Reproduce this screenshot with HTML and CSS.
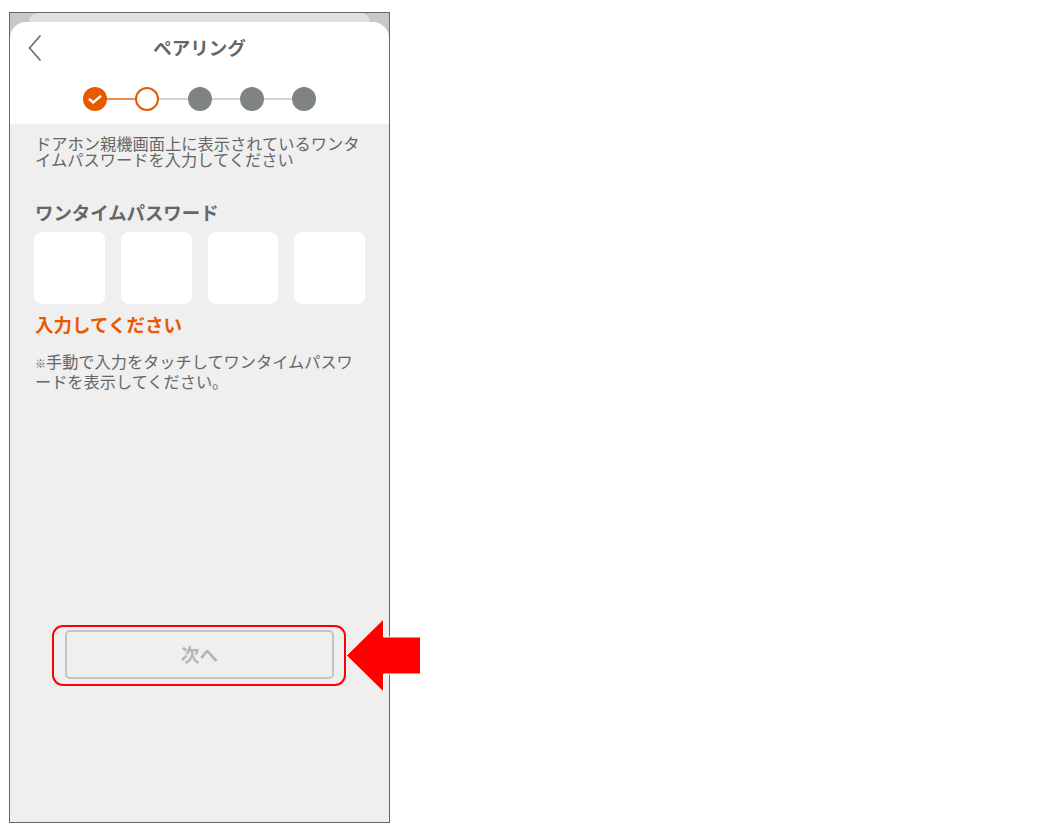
FILE: index.html
```html
<!DOCTYPE html>
<html lang="ja">
<head>
    <meta charset="UTF-8">
    <meta name="viewport" content="width=device-width, initial-scale=1.0">
    <title>ペアリング</title>
    <link rel="stylesheet" href="styles.css">
</head>
<body>
    <div class="phone">
        <div class="sheet-behind"></div>
        <div class="sheet-head">
            <div class="title-bar">
                <svg class="back-icon" width="14" height="28" viewBox="0 0 14 28">
                    <path d="M12.5 1.5 L1.5 14 L12.5 26.5" fill="none" stroke="#666" stroke-width="1.6"/>
                </svg>
                <h1>ぺアリング</h1>
            </div>
            <div class="steps">
                <span class="dot done">
                    <svg width="16" height="12" viewBox="0 0 16 12">
                        <path d="M2 6 L6.2 9.4 L14 2.8" fill="none" stroke="#fff" stroke-width="2.4"/>
                    </svg>
                </span>
                <span class="line active"></span>
                <span class="dot current"></span>
                <span class="line"></span>
                <span class="dot"></span>
                <span class="line"></span>
                <span class="dot"></span>
                <span class="line"></span>
                <span class="dot"></span>
            </div>
        </div>
        <div class="content">
            <p class="lead">ドアホン親機画面上に表示されているワンタ<br>イムパスワードを入力してください</p>
            <h2>ワンタイムパスワード</h2>
            <div class="code-boxes">
                <div class="code-box"></div>
                <div class="code-box"></div>
                <div class="code-box"></div>
                <div class="code-box"></div>
            </div>
            <p class="error">入力してください</p>
            <p class="note"><span class="mark">※</span>手動で入力をタッチしてワンタイムパスワ<br>ードを表示してください。</p>
            <div class="highlight">
                <button type="button" class="next-btn" disabled>次へ</button>
            </div>
        </div>
    </div>

    <svg class="arrow" width="80" height="76" viewBox="0 0 80 76">
        <path d="M1.5 36.5 L38.5 0 L38.5 18 L75.5 18 L75.5 55 L38.5 55 L38.5 73 Z" fill="#f00" stroke="#fff" stroke-width="1"/>
    </svg>
</body>
</html>
```

FILE: styles.css
```css
* {
    box-sizing: border-box;
}

body {
    margin: 0;
    padding: 12px 0 0 9px;
    background: #fff;
    font-family: "Noto Sans CJK JP", "Noto Sans", sans-serif;
    color: #666;
}

.phone {
    display: flex;
    flex-direction: column;
    width: 381px;
    height: 811px;
    border: 1px solid #666;
    background: #c8c8c8;
}

.sheet-behind {
    height: 9px;
    margin: 0 19px;
    background: #e0e0e0;
    border-radius: 10px 10px 0 0;
}

.sheet-head {
    height: 102px;
    background: #fff;
    border-radius: 16px 16px 0 0;
}

.title-bar {
    position: relative;
    display: flex;
    justify-content: center;
    padding-top: 12px;
}

.title-bar h1 {
    margin: 0;
    font-size: 18.5px;
    line-height: 27px;
    font-weight: 700;
}

.back-icon {
    position: absolute;
    left: 18px;
    top: 12px;
}

.steps {
    display: flex;
    justify-content: center;
    align-items: center;
    margin-top: 26px;
}

.dot {
    display: flex;
    justify-content: center;
    align-items: center;
    width: 24px;
    height: 24px;
    border-radius: 50%;
    background: #7f8383;
}

.dot.done {
    background: #e85a00;
}

.dot.current {
    background: #fff;
    border: 2px solid #e85a00;
}

.line {
    width: 28.25px;
    height: 2px;
    background: #d4d4d4;
}

.line.active {
    background: #ee8a4a;
}

.content {
    flex: 1;
    display: flex;
    flex-direction: column;
    padding: 11px 24px 0;
    background: #efefef;
}

.lead {
    margin: 0 0 0 1px;
    font-size: 16.25px;
    line-height: 16px;
    white-space: nowrap;
}

h2 {
    margin: 32px 0 0 1px;
    font-size: 18.4px;
    line-height: 27px;
    font-weight: 700;
}

.code-boxes {
    display: grid;
    grid-template-columns: repeat(4, 1fr);
    gap: 16px;
    margin-top: 6px;
}

.code-box {
    height: 72px;
    background: #fff;
    border-radius: 8px;
}

.error {
    margin: 7px 0 0 1px;
    font-size: 18.5px;
    line-height: 27px;
    font-weight: 700;
    color: #e85a00;
}

.note {
    margin: 14px 0 0 1px;
    font-size: 16.2px;
    line-height: 19.5px;
    white-space: nowrap;
}

.mark {
    font-size: 11px;
    font-weight: 700;
    line-height: 0;
}

.highlight {
    margin: auto 19px 136px 18px;
    height: 61px;
    padding: 3px 10px 5px 11px;
    border: 2px solid #f00;
    border-radius: 11px;
}

.next-btn {
    display: block;
    width: 100%;
    height: 100%;
    padding: 0 0 2px;
    background: #efefef;
    border: 2px solid #c4c4c4;
    border-radius: 5px;
    font-family: inherit;
    font-size: 18.5px;
    font-weight: 700;
    color: #b5b5b5;
}

.arrow {
    position: absolute;
    left: 345px;
    top: 619px;
}
```
